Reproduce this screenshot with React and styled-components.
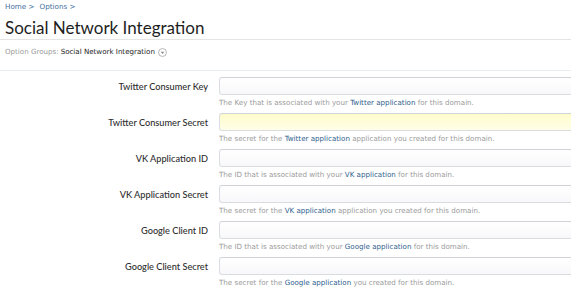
import React from 'react';
import styled, { createGlobalStyle } from 'styled-components';

const GlobalStyle = createGlobalStyle`
  html, body {
    margin: 0;
    padding: 0;
    background: #ffffff;
    overflow: hidden;
  }
  body {
    font-family: Lato, "Open Sans", sans-serif;
    color: #222222;
  }
`;

const Styled = {
  Page: styled.div`
    width: 571px;
    height: 300px;
    overflow: hidden;
  `,
  Breadcrumb: styled.div`
    display: flex;
    gap: 5px;
    padding: 1px 5px 0;
    height: 12px;
    font-family: "DejaVu Sans", sans-serif;
    font-size: 7.2px;
    line-height: 11px;
  `,
  Crumb: styled.a`
    color: #3f6f9c;
    text-decoration: none;
  `,
  Title: styled.h1`
    margin: 0;
    padding: 4px 5px 0;
    height: 22px;
    font-family: Lato, sans-serif;
    font-weight: 400;
    font-size: 17px;
    line-height: 22px;
    color: #1e1e1e;
    border-bottom: 1px solid #e4e4e4;
  `,
  GroupBar: styled.div`
    display: flex;
    align-items: flex-start;
    gap: 2px;
    padding: 7px 5px 0;
    height: 31px;
    box-sizing: border-box;
    font-family: "DejaVu Sans", sans-serif;
    font-size: 7.1px;
    line-height: 10px;
    border-bottom: 1px solid #e6eff5;
    margin-bottom: 6px;
  `,
  GroupLabel: styled.span`
    color: #9a9a9a;
  `,
  GroupName: styled.span`
    color: #222222;
  `,
  Chevron: styled.svg`
    width: 9px;
    height: 9px;
    margin-left: 1px;
    margin-top: 0.5px;
  `,
  Form: styled.div`
    display: flex;
    flex-direction: column;
  `,
  Row: styled.div`
    display: grid;
    grid-template-columns: 208px 400px;
    column-gap: 11px;
    height: 36px;
  `,
  Label: styled.label`
    text-align: right;
    font-family: Lato, sans-serif;
    font-size: 9.2px;
    font-weight: 500;
    line-height: 18px;
    height: 18px;
    color: #2e2e2e;
    padding-top: 1px;
  `,
  Field: styled.div`
    display: flex;
    flex-direction: column;
  `,
  Input: styled.div`
    height: 18px;
    box-sizing: border-box;
    border: 1px solid #d9dce1;
    border-top-color: #cfd2d8;
    border-radius: 3px;
    background: ${p => (p.$active
      ? 'linear-gradient(#fffccb, #fffee8)'
      : 'linear-gradient(#ffffff, #f8f8fb)')};
  `,
  Hint: styled.div`
    margin-top: 3px;
    font-family: "DejaVu Sans", sans-serif;
    font-size: 7.12px;
    line-height: 10px;
    color: #9b9b9b;
    white-space: nowrap;
  `,
  HintLink: styled.a`
    color: #2f5f8e;
    text-decoration: none;
  `,
};

const options = [
  { label: 'Twitter Consumer Key', kind: 'key', service: 'Twitter' },
  { label: 'Twitter Consumer Secret', kind: 'secret', service: 'Twitter', active: true },
  { label: 'VK Application ID', kind: 'id', service: 'VK' },
  { label: 'VK Application Secret', kind: 'secret', service: 'VK' },
  { label: 'Google Client ID', kind: 'id', service: 'Google' },
  { label: 'Google Client Secret', kind: 'secretShort', service: 'Google' },
];

function HintText({ kind, service }) {
  const link = <Styled.HintLink href="#">{service} application</Styled.HintLink>;
  if (kind === 'key') return <>The Key that is associated with your {link} for this domain.</>;
  if (kind === 'id') return <>The ID that is associated with your {link} for this domain.</>;
  if (kind === 'secretShort') return <>The secret for the {link} you created for this domain.</>;
  return <>The secret for the {link} application you created for this domain.</>;
}

export default function App() {
  return (
    <Styled.Page>
      <GlobalStyle />
      <Styled.Breadcrumb>
        <Styled.Crumb href="#">Home &gt;</Styled.Crumb>
        <Styled.Crumb href="#">Options &gt;</Styled.Crumb>
      </Styled.Breadcrumb>
      <Styled.Title>Social Network Integration</Styled.Title>
      <Styled.GroupBar>
        <Styled.GroupLabel>Option Groups:</Styled.GroupLabel>
        <Styled.GroupName>Social Network Integration</Styled.GroupName>
        <Styled.Chevron viewBox="0 0 10 10">
          <circle cx="5" cy="5" r="4.4" fill="#fff" stroke="#9a9a9a" strokeWidth="0.8" />
          <path d="M3 4.2 L7 4.2 L5 6.6 Z" fill="#8a8a8a" />
        </Styled.Chevron>
      </Styled.GroupBar>
      <Styled.Form>
        {options.map(opt => (
          <Styled.Row key={opt.label}>
            <Styled.Label>{opt.label}</Styled.Label>
            <Styled.Field>
              <Styled.Input $active={opt.active} />
              <Styled.Hint>
                <HintText kind={opt.kind} service={opt.service} />
              </Styled.Hint>
            </Styled.Field>
          </Styled.Row>
        ))}
      </Styled.Form>
    </Styled.Page>
  );
}
